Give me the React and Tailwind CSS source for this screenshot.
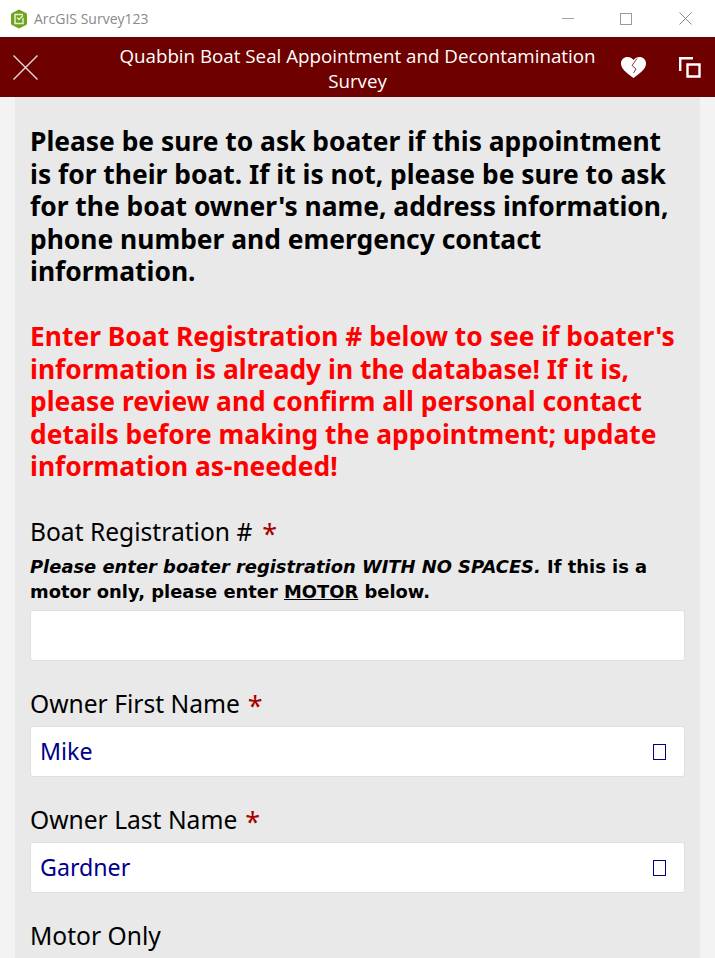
function Star({ className }) {
  return <span className={`${className} align-[-3px] text-[27px] leading-none text-[#a80000]`}>*</span>
}

function Field({ label, value, required }) {
  return (
    <div className="mt-[24px]">
      <div className="text-[24.6px] leading-[38px] text-black">
        {label}
        {required && <Star className="ml-[8px]" />}
      </div>
      <div className="mt-[3px] flex h-[51px] items-center justify-between rounded-[3px] border border-[#dfdfdf] bg-white pl-[9px] pr-[18px] text-[23.2px] text-[#00008b]">
        <span>{value}</span>
        <span className="mt-[1px] h-[16px] w-[13px] border border-[#00008b]"></span>
      </div>
    </div>
  )
}

export default function App() {
  return (
    <div className="flex h-[958px] w-[715px] flex-col overflow-hidden bg-[#f3f3f3] font-['Noto_Sans',sans-serif]">
      {/* Window title bar */}
      <div className="flex h-[37px] shrink-0 items-center bg-white">
        <svg className="ml-[10px] h-[20px] w-[18px]" viewBox="0 0 18 20">
          <path d="M9 0.500l7 3.500q1 .5 1 1.500v9q0 1-1 1.500l-7 3.500-7-3.500q-1-.5-1-1.500v-9q0-1 1-1.500z" fill="#6fa51c" />
          <path d="M13 5.500H5v9h8V9" fill="none" stroke="#e6f0d0" strokeWidth="1.500" />
          <path d="M7 8.500l2 2 4-4" fill="none" stroke="#e6f0d0" strokeWidth="1.300" />
        </svg>
        <span className="ml-[6px] font-['Open_Sans',sans-serif] text-[14px] text-[#8a8a8a]">ArcGIS Survey123</span>
        <div className="ml-auto flex items-center">
          <div className="h-px w-[12px] bg-[#a0a0a0]"></div>
          <div className="ml-[46px] h-[12px] w-[12px] border border-[#9a9a9a]"></div>
          <svg className="ml-[47px] mr-[23px] h-[13px] w-[13px]" viewBox="0 0 13 13" fill="none" stroke="#8a8a8a" strokeWidth="1">
            <path d="M0.500 0.500l12 12M12.500 0.500l-12 12" />
          </svg>
        </div>
      </div>

      {/* Survey header */}
      <div className="flex h-[60px] shrink-0 items-center bg-[#6e0000] text-white">
        <div className="w-[112px] shrink-0">
          <svg className="ml-[13px] h-[25px] w-[25px]" viewBox="0 0 25 25" fill="none" stroke="#e9dcdc" strokeWidth="1.400">
            <path d="M0.500 0.500l24 24M24.500 0.500l-24 24" />
          </svg>
        </div>
        <div className="mt-[2px] flex-1 text-center font-['Open_Sans',sans-serif] text-[18.750px] leading-[25px]">
          Quabbin Boat Seal Appointment and Decontamination Survey
        </div>
        <div className="flex w-[112px] shrink-0 items-center pl-[18px]">
          <svg className="h-[21px] w-[25px] shrink-0" viewBox="0 0 25 21">
            <path d="M12.500 21C6 16 0 12 0 6.500C0 2.500 3 0 6.500 0C9 0 11 1 12.500 3C14 1 16 0 18.500 0C22 0 25 2.500 25 6.500C25 12 19 16 12.500 21z" fill="#fff" />
            <path d="M16 1.500L11 8.500L15 12L12.500 16" fill="none" stroke="#6e0000" strokeWidth="0.800" />
          </svg>
          <svg className="ml-[33px] h-[21px] w-[22px] shrink-0" viewBox="0 0 22 21" fill="none" stroke="#fff" strokeWidth="2.400">
            <path d="M8.500 7.500h12v12h-12z" />
            <path d="M1.200 14V1.200H14" />
          </svg>
        </div>
      </div>

      {/* Form body */}
      <div className="mx-[15px] flex-1 bg-[#e9e9e9] px-[15px] pt-[28px]">
        <p className="text-[26.400px] font-bold leading-[32.600px] text-black">
          Please be sure to ask boater if this appointment is for their boat. If it is not, please be sure to ask for the boat owner's name, address information, phone number and emergency contact information.
        </p>
        <p className="mt-[32px] text-[26.400px] font-bold leading-[32.600px] text-[#ff0000]">
          Enter Boat Registration # below to see if boater's information is already in the database! If it is, please review and confirm all personal contact details before making the appointment; update information as-needed!
        </p>

        <div className="mt-[30px] text-[24.6px] leading-[38px] text-black">
          Boat Registration #<Star className="ml-[10px]" />
        </div>
        <p className="mt-[3px] font-['DejaVu_Sans',sans-serif] text-[17.900px] font-bold leading-[25px] text-black">
          <em>Please enter boater registration WITH NO SPACES.</em> If this is a motor only, please enter <u>MOTOR</u> below.
        </p>
        <div className="mt-[6px] h-[51px] rounded-[3px] border border-[#dfdfdf] bg-white"></div>

        <Field label="Owner First Name" value="Mike" required />
        <Field label="Owner Last Name" value="Gardner" required />
        <div className="mt-[24px] text-[24.6px] leading-[38px] text-black">Motor Only</div>
      </div>
    </div>
  )
}
